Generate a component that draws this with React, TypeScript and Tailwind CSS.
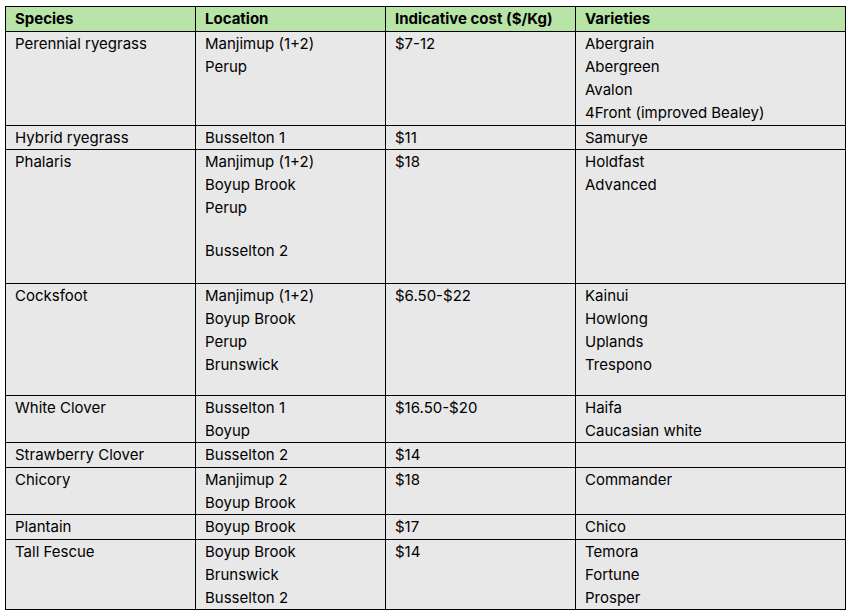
const rows: { species: string; location: string[]; cost: string; varieties: string[]; pad?: boolean }[] = [
  {
    species: "Perennial ryegrass",
    location: ["Manjimup (1+2)", "Perup"],
    cost: "$7-12",
    varieties: ["Abergrain", "Abergreen", "Avalon", "4Front (improved Bealey)"],
    pad: true,
  },
  { species: "Hybrid ryegrass", location: ["Busselton 1"], cost: "$11", varieties: ["Samurye"] },
  {
    species: "Phalaris",
    location: ["Manjimup (1+2)", "Boyup Brook", "Perup", "", "Busselton 2", ""],
    cost: "$18",
    varieties: ["Holdfast", "Advanced"],
    pad: true,
  },
  {
    species: "Cocksfoot",
    location: ["Manjimup (1+2)", "Boyup Brook", "Perup", "Brunswick", "-"],
    cost: "$6.50-$22",
    varieties: ["Kainui", "Howlong", "Uplands", "Trespono"],
  },
  {
    species: "White Clover",
    location: ["Busselton 1", "Boyup"],
    cost: "$16.50-$20",
    varieties: ["Haifa", "Caucasian white"],
  },
  { species: "Strawberry Clover", location: ["Busselton 2"], cost: "$14", varieties: [], pad: true },
  { species: "Chicory", location: ["Manjimup 2", "Boyup Brook"], cost: "$18", varieties: ["Commander"] },
  { species: "Plantain", location: ["Boyup Brook"], cost: "$17", varieties: ["Chico"], pad: true },
  {
    species: "Tall Fescue",
    location: ["Boyup Brook", "Brunswick", "Busselton 2"],
    cost: "$14",
    varieties: ["Temora", "Fortune", "Prosper"],
  },
];

// "" = blank paragraph, "-" = slightly shorter trailing blank
function Lines({ items }: { items: string[] }) {
  return (
    <>
      {items.map((t, i) =>
        t === "" ? (
          <div key={i} className="h-[20px]" />
        ) : t === "-" ? (
          <div key={i} className="h-[19px]" />
        ) : (
          <div key={i} className="leading-[23px] h-[23px] whitespace-nowrap">
            {t}
          </div>
        )
      )}
    </>
  );
}

export default function App() {
  return (
    <div className="w-[848px] h-[612px] bg-white pl-[5px] pt-[6px] text-black font-['Inter',sans-serif] text-[15px]">
      <table className="border-collapse border border-black table-fixed w-[841px]">
        <thead>
          <tr className="bg-[#b9e4a7] h-[25px]">
            <th className="w-[190px] border border-black text-left font-bold pl-[9px] p-0 align-middle">Species</th>
            <th className="w-[190px] border border-black text-left font-bold pl-[9px] p-0 align-middle">Location</th>
            <th className="w-[190px] border border-black text-left font-bold pl-[9px] p-0 align-middle">
              Indicative cost ($/Kg)
            </th>
            <th className="border border-black text-left font-bold pl-[9px] p-0 align-middle">Varieties</th>
          </tr>
        </thead>
        <tbody>
          {rows.map((r) => {
            const cell = r.pad
              ? "border border-black align-top p-0 pl-[9px] pb-px"
              : "border border-black align-top p-0 pl-[9px]";
            return (
              <tr key={r.species} className="bg-[#e8e8e8]">
                <td className={cell}>
                  <Lines items={[r.species]} />
                </td>
                <td className={cell}>
                  <Lines items={r.location} />
                </td>
                <td className={cell}>
                  <Lines items={[r.cost]} />
                </td>
                <td className={cell}>
                  <Lines items={r.varieties} />
                </td>
              </tr>
            );
          })}
        </tbody>
      </table>
    </div>
  );
}
